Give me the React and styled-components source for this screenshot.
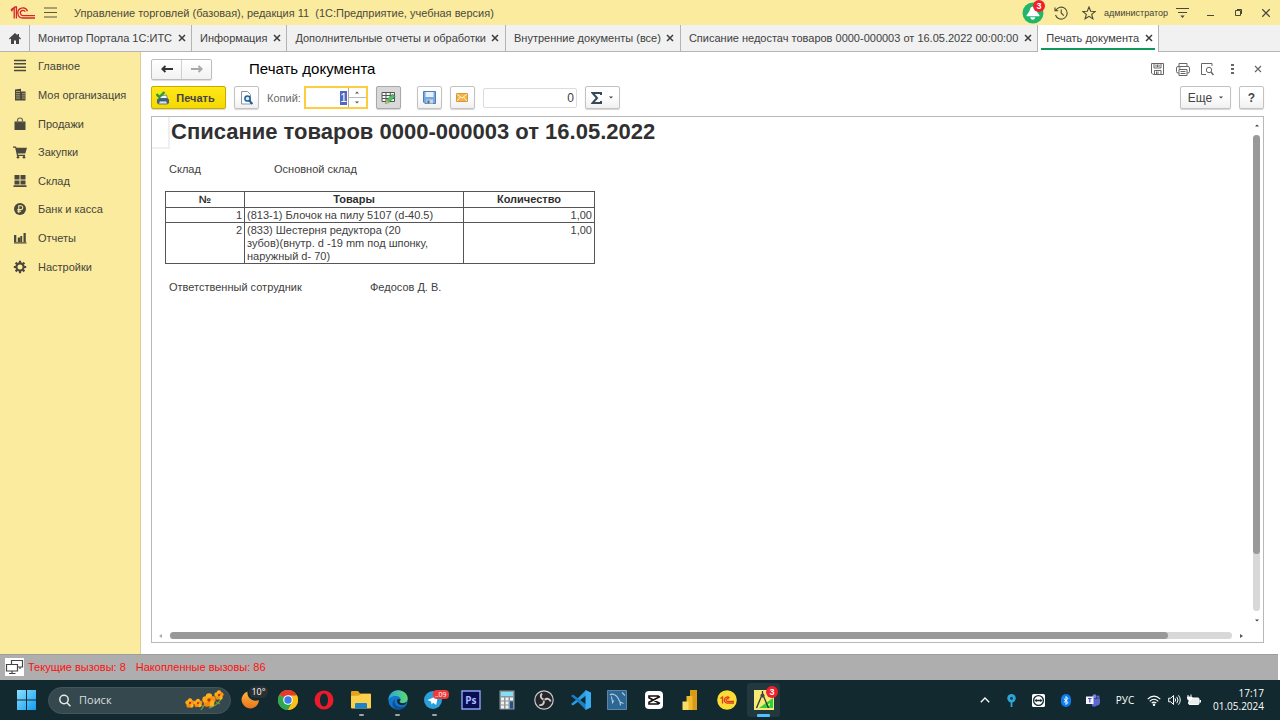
import React, { useEffect, useRef } from "react";
import styled, { createGlobalStyle, css } from "styled-components";

const GlobalStyle = createGlobalStyle`
  *, *::before, *::after { box-sizing: border-box; }
  body { margin: 0; background: #fff; color: #404040; font: 11px/14px "Liberation Sans", Arial, sans-serif; }
  button, input { font: inherit; color: inherit; margin: 0; }
  h1, h2, p, dl, dd, ul { margin: 0; padding: 0; }
  ul { list-style: none; }
  svg { display: block; flex: none; }
`;

const Page = styled.div`
  display: flex;
  flex-direction: column;
  min-height: 100vh;
`;

/* ---------- window title ---------- */
const TitleBar = styled.header`
  display: flex;
  align-items: center;
  height: 25px;
  padding: 0 0 0 10px;
  background: #fbeb9e;
`;
const PlainButton = styled.button`
  display: flex;
  align-items: center;
  justify-content: center;
  padding: 0;
  border: 0;
  background: none;
  color: inherit;
  cursor: pointer;
`;
const WindowTitle = styled.span`
  flex: 1;
  margin-left: 10px;
  font-size: 11px;
  color: #4c4a3c;
  white-space: pre;
`;
const TitleTools = styled.div`
  display: flex;
  align-items: center;
`;
const TitleTool = styled(PlainButton)`
  width: 28px;
  height: 25px;
`;
const UserName = styled.span`
  margin-left: 1px;
  font-size: 9px;
  color: #45443a;
`;
const BellButton = styled(TitleTool)`
  position: relative;
`;
const Badge = styled.span`
  position: absolute;
  top: ${(p) => p.$top}px;
  right: ${(p) => p.$right}px;
  width: 12px;
  height: 12px;
  border-radius: 6px;
  background: #f0202c;
  color: #fff;
  font: bold 9px/12px "Liberation Sans", Arial, sans-serif;
  text-align: center;
`;

/* ---------- open tabs ---------- */
const TabStrip = styled.nav`
  display: flex;
  height: 27px;
  border-bottom: 1px solid #b4b4b4;
  background: #f1f1f1;
`;
const HomeTab = styled(PlainButton)`
  width: 30px;
  border-right: 1px solid #b4b4b4;
  color: #444;
`;
const Tab = styled.div`
  display: flex;
  align-items: center;
  gap: 4px;
  padding: 0 4px 0 8px;
  border-right: 1px solid #b4b4b4;
  ${(p) =>
    p.$active &&
    css`
      margin-bottom: -1px;
      padding-bottom: 1px;
      background: linear-gradient(#109858, #109858) 50% 23px / calc(100% - 6px) 2px no-repeat #fff;
    `}
`;
const TabLabel = styled(PlainButton)`
  font-size: 11px;
  color: #404040;
  white-space: nowrap;
`;
const CloseButton = styled(PlainButton)`
  width: 11px;
  height: 12px;
  color: #3c3c3c;
`;

/* ---------- work area ---------- */
const Workspace = styled.div`
  display: flex;
  flex: 1;
`;
const Sidebar = styled.nav`
  width: 141px;
  border-right: 1px solid #d8cfa0;
  background: #fbeb9e;
`;
const Sections = styled.ul`
  display: grid;
  grid-template-rows: repeat(8, 1fr);
  height: 229px;
`;
const Section = styled.li`
  display: flex;
`;
const SectionLink = styled.a`
  display: flex;
  flex: 1;
  align-items: center;
  gap: 11px;
  padding-left: 13px;
  font-size: 11px;
  color: #45443a;
  text-decoration: none;
`;
const Main = styled.main`
  display: flex;
  flex: 1;
  flex-direction: column;
  min-width: 0;
  padding: 6px 16px 11px 10px;
`;
const FormHeader = styled.div`
  display: flex;
  align-items: center;
  height: 22px;
  margin-right: -6px;
`;
const NavButtons = styled.div`
  display: flex;
  width: 61px;
  height: 21px;
  border: 1px solid #bdbdbd;
  border-radius: 2px;
  background: linear-gradient(#fff, #f2f2f2);
  box-shadow: 0 1px 1px #ddd;
`;
const NavButton = styled(PlainButton)`
  flex: 1;
  color: ${(p) => (p.disabled ? "#a8a8a8" : "#333")};
  & + & { border-left: 1px solid #cfcfcf; }
`;
const FormTitle = styled.h1`
  flex: 1;
  margin-left: 37px;
  font-size: 15px;
  line-height: 20px;
  font-weight: normal;
  color: #000;
`;
const FormTool = styled(PlainButton)`
  width: 25px;
  height: 20px;
  color: #666;
`;

const Toolbar = styled.div`
  display: flex;
  align-items: center;
  gap: 8px;
  margin: 6px 0 7px;
  height: 23px;
`;
const ToolButton = styled.button`
  display: flex;
  align-items: center;
  justify-content: center;
  gap: 7px;
  width: ${(p) => p.$width || 25}px;
  height: 23px;
  padding: 0;
  border: 1px solid ${(p) => (p.$pressed ? "#a8a8a8" : "#c2c2c2")};
  border-radius: 2px;
  background: ${(p) => (p.$pressed ? "#d9d9d9" : "linear-gradient(#fff 40%, #f0f0f0)")};
  box-shadow: 0 1px 1px #d6d6d6;
  color: #444;
  font-size: 12px;
  cursor: pointer;
`;
const PrintButton = styled(ToolButton)`
  width: 75px;
  gap: 6px;
  padding-right: 6px;
  border-color: #c8ab00;
  background: linear-gradient(#ffe81a, #f5d800);
  font-size: 11px;
  font-weight: bold;
`;
const ButtonGap = styled.span`
  width: 0;
`;
const Spacer = styled.span`
  flex: 1;
`;
const Copies = styled.label`
  display: flex;
  align-items: center;
  gap: 3px;
  font-size: 11px;
  color: #6a6a6a;
`;
const CopiesBox = styled.span`
  display: flex;
  width: 64px;
  height: 23px;
  border: 2px solid #fccd3c;
  background: #fff;
`;
const CopiesInput = styled.input`
  width: 42px;
  padding: 0 1px 0 4px;
  border: 0;
  outline: 0;
  background: none;
  font-size: 12px;
  text-align: right;
  &::selection { background: #4d68c4; color: #fff; }
`;
const Stepper = styled.span`
  display: flex;
  flex: 1;
  flex-direction: column;
  border-left: 1px solid #aaa;
`;
const StepButton = styled(PlainButton)`
  flex: 1;
  color: #555;
  & + & { border-top: 1px solid #bbb; }
`;
const SumInput = styled.input`
  width: 94px;
  height: 20px;
  padding: 0 2px;
  border: 1px solid #dcdcdc;
  border-radius: 2px;
  outline: 0;
  font-size: 12px;
  text-align: right;
`;

/* ---------- printed form ---------- */
const Viewer = styled.section`
  display: grid;
  flex: 1;
  grid-template: 1fr 13px / 1fr 13px;
  border: 1px solid #b8b8b8;
`;
const Sheet = styled.article`
  color: #404040;
`;
const SheetHead = styled.div`
  display: flex;
  gap: 1px;
`;
const CurrentCell = styled.div`
  width: 18px;
  height: 32px;
  border: solid #efefef;
  border-width: 0 2px 2px 0;
`;
const DocTitle = styled.h2`
  font-size: 22px;
  line-height: 30px;
  color: #303030;
`;
const Fields = styled.dl`
  display: flex;
  margin: ${(p) => p.$top}px 0 15px 17px;
  line-height: 13px;
`;
const FieldName = styled.dt`
  width: ${(p) => p.$width}px;
`;
const Goods = styled.table`
  width: 430px;
  margin-left: 13px;
  border-collapse: collapse;
  table-layout: fixed;
  line-height: 13px;
`;
const Cell = styled.td`
  padding: 1px 2px 0;
  border: 1px solid #555;
  text-align: ${(p) => p.$align || "left"};
  vertical-align: top;
  white-space: pre-line;
`;
const HeadCell = styled.th`
  width: ${(p) => (p.$width ? `${p.$width}px` : "auto")};
  padding: 1px 2px;
  border: 1px solid #555;
  color: #303030;
`;
const ScrollBar = styled.div`
  display: flex;
  align-items: center;
  gap: 8px;
  flex-direction: ${(p) => (p.$vertical ? "column" : "row")};
  padding: ${(p) => (p.$vertical ? "7px 0" : "0 7px")};
`;
const Track = styled.div`
  display: flex;
  flex: 1;
  flex-direction: inherit;
  align-items: stretch;
  border-radius: 4px;
  background: #d8d8d8;
  ${(p) => (p.$vertical ? "width: 7px;" : "height: 7px;")}
`;
const Thumb = styled.div`
  flex: 0 0 ${(p) => p.$share}%;
  border-radius: 4px;
  background: #999;
`;

/* ---------- status line ---------- */
const StatusBar = styled.footer`
  display: flex;
  align-items: center;
  gap: 10px;
  height: 26px;
  margin-right: 2px;
  padding: 0 0 2px 5px;
  border-top: 1px solid #9e9e9e;
  background: #aeaeae;
  color: #ff1010;
  font-size: 11px;
`;
const StatusLead = styled.span`
  display: flex;
  align-items: center;
  gap: 4px;
`;

/* ---------- desktop taskbar ---------- */
const Taskbar = styled.div`
  display: flex;
  align-items: center;
  height: 40px;
  padding: 0 16px 0 16px;
  background: #12292f;
  color: #fff;
  font-family: "Open Sans", "Noto Sans", sans-serif;
`;
const SearchBox = styled.label`
  display: flex;
  align-items: center;
  gap: 8px;
  width: 183px;
  height: 27px;
  margin: 0 2px 0 11px;
  padding: 0 6px 0 10px;
  border: 1px solid #43565b;
  border-radius: 14px;
  background: #35484d;
`;
const SearchInput = styled.input`
  flex: 1;
  min-width: 0;
  padding: 0;
  border: 0;
  outline: 0;
  background: none;
  font-size: 11px;
  &::placeholder { color: #d9dfe0; opacity: 1; }
`;
const Apps = styled.div`
  display: grid;
  grid-template-columns: repeat(15, 1fr);
  width: 549px;
`;
const AppButton = styled(PlainButton)`
  position: relative;
  height: 34px;
  margin: 0 2px;
  border-radius: 3px;
  background: ${(p) => (p.$active ? "#22383e" : "none")};
  ${(p) =>
    (p.$running || p.$active) &&
    css`
      &::after {
        content: "";
        position: absolute;
        bottom: ${p.$active ? 0 : 1}px;
        width: ${p.$active ? 13 : 5}px;
        height: ${p.$active ? 3 : 2}px;
        border-radius: 1px;
        background: ${p.$active ? "#4cc2ff" : "#9aa5a8"};
      }
    `}
`;
const Pill = styled.span`
  position: absolute;
  top: ${(p) => (p.$red ? 7 : 3)}px;
  right: ${(p) => (p.$red ? 2 : 0)}px;
  padding: 0 2px;
  border-radius: ${(p) => (p.$red ? 4 : 6)}px;
  background: ${(p) => (p.$red ? "#ee3a3a" : "#2b3033")};
  font-size: ${(p) => (p.$red ? 7 : 9)}px;
  line-height: ${(p) => (p.$red ? 9 : 12)}px;
`;
const Tray = styled.div`
  display: flex;
  align-items: center;
  margin-left: auto;
`;
const TrayButton = styled(PlainButton)`
  width: ${(p) => p.$width || 27}px;
  height: 34px;
  font-size: 10px;
`;
const Clock = styled.time`
  margin-left: 9px;
  font-size: 10px;
  line-height: 13px;
  text-align: right;
`;

/* ---------- drawings ---------- */
const Logo = () => (
  <svg width="26" height="14" viewBox="0 0 26 14" fill="none" stroke="#d8232a" strokeWidth="1.3">
    <path d="M1 4.5 4.2 2v10.5M2 5.5V3.6M6.4 12.5V1H5L1 3.8" />
    <path d="M17.5 5.2A5 5 0 1 0 13 12h12" />
    <path d="M15.2 5.7A2.6 2.6 0 1 0 13 9.6h12" />
  </svg>
);
const MenuIcon = () => (
  <svg width="13" height="11" viewBox="0 0 13 11" stroke="#5a573f" strokeWidth="1.2">
    <path d="M0 1h13M0 5.5h13M0 10h13" />
  </svg>
);
const BellIcon = () => (
  <svg width="22" height="22" viewBox="0 0 22 22">
    <circle cx="11" cy="11" r="10.5" fill="#21b66b" />
    <path d="M11 4.500c-2.500.3-3 2.500-3.500 4.500L4.500 13.500q-.4.800.5.800h12q.9 0 .5-.8L14.500 9C14 7 13.500 4.800 11 4.500z" fill="#fff" />
    <path d="M8.300 15.200h4.900c0 3.300-4.900 3.300-4.900 0z" fill="#fff" />
  </svg>
);
const HistoryIcon = () => (
  <svg width="14" height="14" viewBox="0 0 14 14" fill="none" stroke="#4a4838" strokeWidth="1.1">
    <path d="M1.8 4.5A6 6 0 1 1 1.5 9M1 1.5v3.3h3.3M7.2 3.5V7l2.6 2.7" />
  </svg>
);
const StarIcon = () => (
  <svg width="14" height="14" viewBox="0 0 14 14" fill="none" stroke="#4a4838" strokeWidth="1.1">
    <path d="M7 1l1.700 4.200 4.500.3-3.500 2.900 1.200 4.400L7 10.400l-3.900 2.400 1.200-4.400L.8 5.500l4.500-.3z" />
  </svg>
);
const SettingsMenuIcon = () => (
  <svg width="13" height="12" viewBox="0 0 13 12">
    <path d="M0 1.500h13M2 5.500h9" stroke="#4a4838" strokeWidth="1.2" />
    <path d="M4.300 8.500h4.400L6.500 11z" fill="#4a4838" />
  </svg>
);
const MinimizeIcon = () => (
  <svg width="9" height="10" viewBox="0 0 9 10" stroke="#4a4838"><path d="M1 7.500h7" /></svg>
);
const RestoreIcon = () => (
  <svg width="9" height="9" viewBox="0 0 9 9" fill="none" stroke="#4a4838">
    <path d="M1.500 2.500h5v5h-5zM3 1.500h4.500V6" />
  </svg>
);
const Cross = ({ size = 8, width = 1.5 }) => (
  <svg width={size} height={size} viewBox="0 0 8 8" stroke="currentColor" strokeWidth={width}>
    <path d="M1 1l6 6M7 1L1 7" />
  </svg>
);
const HomeIcon = () => (
  <svg width="12" height="11" viewBox="0 0 12 11" fill="currentColor">
    <path d="M6 0L0 5.600l.8.8L2 5.500V11h3V7.500h2V11h3V5.500l1.200.9.800-.8-2-1.900V1H8.500v1.300z" />
  </svg>
);
const Arrow = ({ flip }) => (
  <svg width="12" height="8" viewBox="0 0 12 8" fill="none" stroke="currentColor" strokeWidth="1.9">
    {flip ? <path d="M0 4h11M7.500 1l3.200 3-3.200 3" /> : <path d="M12 4H1M4.500 1L1.300 4l3.200 3" />}
  </svg>
);

const sectionIcons = {
  list: <path d="M1 1.500h12M1 4.800h12M1 8.200h12M1 11.500h12" stroke="#4b493d" strokeWidth="1.6" />,
  building: (
    <>
      <path d="M2 1.500l6-.8V12.500H2zM8 3.500h4.500v9H8z" fill="#4b493d" />
      <path d="M3 3.500h4M3 5.700h4M3 7.900h4M3 10.100h4M9 5.700h3M9 7.900h3M9 10.100h3" stroke="#c6ba7e" strokeWidth=".8" />
    </>
  ),
  bag: (
    <>
      <path d="M1.500 4.500h11v8.500h-11z" fill="#4b493d" />
      <path d="M4.500 6V3.500a2.500 2.500 0 0 1 5 0V6" fill="none" stroke="#6d6a54" strokeWidth="1.2" />
    </>
  ),
  cart: (
    <>
      <path d="M0 1.500h2.800l.8 1.300H14L12.300 8.500H4.800l.2 1.200h7v1.200H4L2.200 2.700H0z" fill="#4b493d" />
      <circle cx="5" cy="12.200" r="1.3" fill="#4b493d" />
      <circle cx="11" cy="12.200" r="1.3" fill="#4b493d" />
    </>
  ),
  stock: <path d="M1.500 1h5v4.600h-5zM7.500 1h5v4.600h-5zM1.500 6.500h5v4h-5zM7.500 6.500h5v4h-5zM.5 11.300h13V13H.5z" fill="#4b493d" />,
  ruble: (
    <>
      <circle cx="7" cy="7" r="6" fill="#4b493d" />
      <path d="M5.800 11V3.800h2.100a1.900 1.900 0 0 1 0 3.800H4.300M4.300 9.200h3.800" fill="none" stroke="#fbeb9e" strokeWidth="1.1" />
    </>
  ),
  chart: <path d="M1 4h2.300v7H1zM4.800 6.500h2.300V11H4.800zM7.300 5h1.900v6H7.300zM10.500 2h2.300v9h-2.300zM1 11.200h12.500v1.200H1z" fill="#4b493d" />,
  gear: (
    <>
      <circle cx="7" cy="7" r="3.6" fill="none" stroke="#4b493d" strokeWidth="2.2" />
      <path d="M7 .8v2.400M7 10.800v2.400M.8 7h2.400M10.800 7h2.400M2.600 2.600l1.700 1.700M9.700 9.700l1.700 1.700M2.600 11.400l1.700-1.700M9.700 4.300l1.700-1.700" stroke="#4b493d" strokeWidth="2.2" />
    </>
  ),
};

const PrinterColorIcon = () => (
  <svg width="14" height="14" viewBox="0 0 14 14">
    <path d="M3.500 5l7-1 1 4h-8z" fill="#f4f8fb" stroke="#5a7285" strokeWidth=".8" />
    <path d="M1 8.500l2-1.500h8l2 1.500v4H1z" fill="#48637a" />
    <path d="M3.500 10h7l1 3h-9z" fill="#cfe3f0" stroke="#35516a" strokeWidth=".7" />
    <path d="M.5 3l2.800 3L8.500 1" fill="none" stroke="#23a03c" strokeWidth="2.4" />
  </svg>
);
const PreviewIcon = () => (
  <svg width="13" height="14" viewBox="0 0 13 14" fill="none">
    <path d="M1.500.5h6l3 3v9.500h-9z" fill="#fff" stroke="#8a97a3" />
    <circle cx="7.500" cy="7.500" r="2.600" fill="#d5e9f8" stroke="#1f5f94" strokeWidth="1.5" />
    <path d="M9.300 9.500l3 3.500" stroke="#1f5f94" strokeWidth="2" />
  </svg>
);
const GridPencilIcon = () => (
  <svg width="15" height="13" viewBox="0 0 15 13">
    <path d="M1 1.500h12.500v9H1zM1 4.500h12.500M1 7.500h12.500M5 1.500v9M9.300 1.500v9" fill="#f7f7f7" stroke="#555" />
    <path d="M4.500 12.500l1-3.500 6-6 2.500 2.500-6 6z" fill="#4fc06a" stroke="#217a3a" strokeWidth=".5" />
    <path d="M4.500 12.500l1-3.500 2.500 2.500z" fill="#e8b070" />
  </svg>
);
const DiskColorIcon = () => (
  <svg width="13" height="13" viewBox="0 0 13 13">
    <path d="M.5.5h12v12H2L.5 11z" fill="#76a9df" stroke="#4f7fb8" />
    <path d="M2.500 1h8v5h-8z" fill="#e6f1fb" />
    <path d="M3.500 8.500h6.500v4H3.500z" fill="#c9d6e2" />
    <path d="M4.500 9.500h2v3h-2z" fill="#49698a" />
  </svg>
);
const MailIcon = () => (
  <svg width="12" height="9" viewBox="0 0 12 9">
    <path d="M.5.5h11v8H.5z" fill="#f3b34c" stroke="#d99732" />
    <path d="M.8 1L6 5l5.200-4M1 8l3.500-4M11 8L7.500 4" fill="none" stroke="#fff1d0" />
  </svg>
);
const SigmaIcon = () => (
  <svg width="11" height="12" viewBox="0 0 11 12" fill="none" stroke="#34495a" strokeWidth="2">
    <path d="M10 3V1H1.500L6 6l-4.500 5H10V9" />
  </svg>
);
const Caret = ({ up }) => (
  <svg width="4" height="3" viewBox="0 0 4 3" fill="currentColor">
    <path d={up ? "M0 2.500h4L2 .5z" : "M0 .5h4L2 2.500z"} />
  </svg>
);
const SideCaret = ({ left }) => (
  <svg width="3" height="4" viewBox="0 0 3 4" fill={left ? "#aaa" : "#555"}>
    <path d={left ? "M3 0v4L0 2z" : "M0 0v4l3-2z"} />
  </svg>
);
const SaveIcon = () => (
  <svg width="13" height="12" viewBox="0 0 13 12" fill="none" stroke="currentColor">
    <path d="M.5.5h12v11H2L.5 10zM3 .5V5h7V.5M3.500 11.500v-4h6.500v4M5 1.500V4M6.500 1.500V4M8 1.500V4M5.500 8.500v3h1.500v-3" />
  </svg>
);
const PrinterIcon = () => (
  <svg width="14" height="13" viewBox="0 0 14 13" fill="none" stroke="currentColor">
    <path d="M3 3.500v-3h8v3M3 10H2Q.5 10 .5 8.500V5Q.5 3.500 2 3.500h10q1.500 0 1.500 1.500v3.500Q13.500 10 12 10h-1M3 6.500h8v6H3zM4.500 8.500h5M4.500 10.500h5M2.500 5h2" />
  </svg>
);
const PageSearchIcon = () => (
  <svg width="13" height="13" viewBox="0 0 13 13" fill="none" stroke="currentColor">
    <path d="M5 11.500H.5V.5h10.500V3" />
    <circle cx="8" cy="7" r="2.7" />
    <path d="M10 9l2.500 3" strokeWidth="1.5" />
  </svg>
);
const DotsIcon = () => (
  <svg width="3" height="10" viewBox="0 0 3 10" fill="currentColor">
    <path d="M0 0h3v2H0zM0 4h3v2H0zM0 8h3v2H0z" />
  </svg>
);
const CallsIcon = () => (
  <svg width="19" height="18" viewBox="0 0 19 18">
    <path d="M0 0h19v18H0z" fill="#fff" />
    <path d="M6.500 6V2.500h11V9H13M1.500 6.500h11v6.500h-11zM7 13v2.500M4 15.500h6.500M15 9v2" fill="none" stroke="#444" strokeWidth="1.2" />
  </svg>
);

const WindowsIcon = () => (
  <svg width="21" height="20" viewBox="0 0 21 20">
    <defs>
      <linearGradient id="win" x1="0" y1="0" x2="1" y2="1">
        <stop offset="0" stopColor="#8be0ff" />
        <stop offset="1" stopColor="#109cf0" />
      </linearGradient>
    </defs>
    <path d="M1 0h9v9.500H1zM11 0h9v9.500h-9zM1 10.500h9V20H1zM11 10.500h9V20h-9z" fill="url(#win)" />
  </svg>
);
const SearchIcon = () => (
  <svg width="12" height="13" viewBox="0 0 12 13" fill="none" stroke="#e4e9ea" strokeWidth="1.5">
    <circle cx="5" cy="5.500" r="4.2" />
    <path d="M8 8.700l3.500 3.600" />
  </svg>
);
const Flower = ({ x, y, s = 1 }) => (
  <g transform={`translate(${x} ${y}) scale(${s})`}>
    <circle cx="0" cy="-3" r="2.8" fill="#ffb11f" />
    <circle cx="3" cy="-.5" r="2.8" fill="#f79212" />
    <circle cx="1.800" cy="3" r="2.8" fill="#ffb11f" />
    <circle cx="-1.800" cy="3" r="2.8" fill="#f58a0c" />
    <circle cx="-3" cy="-.5" r="2.8" fill="#ffa81a" />
    <circle r="1.5" fill="#b23a08" />
  </g>
);
const FlowersIcon = () => (
  <svg width="39" height="21" viewBox="0 0 39 21">
    <path d="M4 15q10-5 14 2M16 20q6-10 14-14M24 18q8-2 12-9M31 12l4 2" fill="none" stroke="#6e9a4a" strokeWidth="1.3" />
    <Flower x={5} y={13} s={0.8} />
    <Flower x={13} y={13} s={0.75} />
    <Flower x={24} y={10} s={1.15} />
    <Flower x={34} y={5} s={0.8} />
  </svg>
);

const appDrawings = {
  weather: (
    <>
      <defs>
        <linearGradient id="moon" x1="0" y1="0" x2="0" y2="1">
          <stop offset="0" stopColor="#ffb43c" />
          <stop offset="1" stopColor="#e8741c" />
        </linearGradient>
      </defs>
      <path d="M6.500 1.500c-1 6 5 11 11.500 8.500A8.700 8.700 0 1 1 6.500 1.500z" fill="url(#moon)" />
    </>
  ),
  chrome: (
    <>
      <circle cx="10" cy="10" r="10" fill="#fbc116" />
      <path d="M10 10L1.300 5A10 10 0 0 1 18.700 5z" fill="#e33b2e" />
      <path d="M10 10L1.300 5a10 10 0 0 0 8.700 15l4.300-7.500z" fill="#2da94f" />
      <path d="M10 5.500h9A10 10 0 0 1 10 20l4-7.500z" fill="#fbc116" />
      <circle cx="10" cy="10" r="4.8" fill="#fff" />
      <circle cx="10" cy="10" r="3.7" fill="#3c7bea" />
    </>
  ),
  opera: <path fillRule="evenodd" d="M10 .5a9.500 9.500 0 1 0 0 19 9.500 9.500 0 0 0 0-19zm0 3c2.600 0 4 3 4 6.500s-1.400 6.500-4 6.500S6 13.500 6 10s1.400-6.500 4-6.500z" fill="#ea1b2d" />,
  explorer: (
    <>
      <path d="M0 2q0-1 1-1h6l2 2.500h10q1 0 1 1V17H0z" fill="#e4a11c" />
      <path d="M0 6l8-.5 2-1.500h10v13.500q0 1-1 1H1q-1 0-1-1z" fill="#fdd04b" />
      <path d="M4 18.500V14q0-1 1-1h10q1 0 1 1v4.500z" fill="#1f83c8" />
    </>
  ),
  edge: (
    <>
      <defs>
        <linearGradient id="edgeTop" x1="0" y1="0" x2="1" y2="0">
          <stop offset="0" stopColor="#2aa5e0" />
          <stop offset="1" stopColor="#5bdc6c" />
        </linearGradient>
      </defs>
      <circle cx="10" cy="10" r="9.7" fill="#1577c8" />
      <path d="M.3 10C.8 4.300 5 .3 10.200.3c5.500 0 9.500 4 9.500 8 0 3-2.200 5-5 5-2 0-3.200-.8-3.200-1.500s1-1 1-2.500C12.500 7.500 10.800 6 8 6 4 6 1 8 .3 10z" fill="url(#edgeTop)" />
      <path d="M7.500 9c-3 5 2 9.500 9 7.500 1-.3 1.600-1 1.600-1-1 2-4 4.200-7.600 4.200C4 19 2.500 12 7.500 9z" fill="#0c4f9b" />
      <path d="M12.500 9.300c0 1.500-1 1.800-1 2.500s1.200 1.500 3.200 1.500c1.500 0 3-.5 4-1.700-.3 2.500-2.500 4-5 3.700-4-.4-5.700-3.500-4-6.300z" fill="#12292f" />
    </>
  ),
  telegram: (
    <>
      <circle cx="9" cy="10" r="9" fill="#2a9fdb" />
      <path d="M3.500 10L14 5.500 12.200 15l-3-2.200-1.600 1.800-.6-3z" fill="#fff" />
    </>
  ),
  photoshop: <path d="M1 1h18v18H1z" fill="#0b0d52" stroke="#8aa4f4" strokeWidth="1.4" />,
  calculator: (
    <>
      <path d="M2.500.5h15v19h-15z" fill="#8d979c" />
      <path d="M4 2h12v4H4z" fill="#7fe0f6" />
      <path d="M4 7.500h3v3H4zM8.500 7.500h3v3h-3zM13 7.500h3v3h-3zM4 11.500h3v3H4zM8.500 11.500h3v3h-3zM4 15.500h3v3H4zM8.500 15.500h3v3h-3z" fill="#eef2f3" />
      <path d="M13 11.500h3v7h-3z" fill="#20518d" />
    </>
  ),
  obs: (
    <>
      <circle cx="10" cy="10" r="9.200" fill="#26262a" stroke="#c9c9c9" strokeWidth="1.2" />
      <g fill="none" stroke="#cfcfcf" strokeWidth="1.9">
        <path d="M8 3.500c-2 2-1.500 5 1.500 6" />
        <path d="M8 3.500c-2 2-1.500 5 1.500 6" transform="rotate(120 10 10)" />
        <path d="M8 3.500c-2 2-1.500 5 1.500 6" transform="rotate(240 10 10)" />
      </g>
    </>
  ),
  vscode: (
    <>
      <path d="M15 0v5.500L2 15.500 0 14l5-4z" fill="#2b9fea" />
      <path d="M15 20v-5.500L2 4.500 0 6l5 4z" fill="#1b80c8" />
      <path d="M14.500 0L20 2.500v15L14.500 20z" fill="#38adf2" />
    </>
  ),
  workbench: (
    <>
      <path d="M.5.5h19v19H.5z" fill="#2c6796" stroke="#5c86a8" />
      <path d="M3 5c1.500-1.500 3-1 4.500-.2C10.500 6 11.500 9 13 12l3.500 1.500M4.500 6.500c0 2.500 1 3 1 6l1.500-2M13 12l.5 3.500M15 2.500l3 3" fill="none" stroke="#b4cbdc" strokeWidth="1.1" />
    </>
  ),
  capcut: (
    <>
      <rect x="1" y="1" width="18" height="18" rx="4" fill="#fff" />
      <path d="M16 6.500L5 12.300V14h9v-1.500M16 13.500L5 7.700V6h9v1.500" fill="none" stroke="#111" strokeWidth="1.6" />
    </>
  ),
  powerbi: (
    <>
      <path d="M10 0h7v20h-7z" fill="#d99a18" />
      <path d="M6.500 6h6v14h-6z" fill="#efba2c" />
      <path d="M2.500 11.500h6V20h-6z" fill="#fbdc66" />
    </>
  ),
  onec: (
    <>
      <circle cx="10" cy="10" r="9.8" fill="#fbdc35" />
      <path d="M3.500 8.500L5.500 7v6.500M12.500 8A3 3 0 1 0 10.500 13h6.500M11.500 9.300a1.300 1.300 0 1 0-1 2h6.500" fill="none" stroke="#dc3b20" strokeWidth="1.3" />
    </>
  ),
  designer: (
    <>
      <path d="M0 0h20v20H0z" fill="#f6ea76" />
      <path d="M19 8v10H5z" fill="#2fd03a" />
      <path d="M16 13v2.500h-3.500z" fill="#f6ea76" />
      <path d="M8.500 1v3M8 5L2.500 18M9 5l5.500 13" fill="none" stroke="#333" strokeWidth="1.3" />
      <circle cx="8.500" cy="5.500" r="2" fill="#444" />
    </>
  ),
};
const PsText = styled.span`
  position: absolute;
  color: #a9bcff;
  font: bold 10px/20px "Open Sans", sans-serif;
`;

const ChevronUp = () => (
  <svg width="10" height="6" viewBox="0 0 10 6" fill="none" stroke="#fff" strokeWidth="1.3"><path d="M.8 5.200L5 1l4.200 4.200" /></svg>
);
const PinIcon = () => (
  <svg width="9" height="13" viewBox="0 0 9 13">
    <circle cx="4.500" cy="4.300" r="4.2" fill="#2fa6d8" />
    <circle cx="4.500" cy="4.300" r="1.5" fill="#12425c" />
    <path d="M4.500 7v6" stroke="#2fa6d8" strokeWidth="1.8" />
  </svg>
);
const RemoteIcon = () => (
  <svg width="13" height="13" viewBox="0 0 13 13">
    <rect width="13" height="13" rx="1.5" fill="#fff" />
    <circle cx="6.500" cy="6.500" r="4.9" fill="none" stroke="#12292f" strokeWidth="1.3" />
    <path d="M2.500 6.500l2.200-1.800v1.100h3.600V4.700l2.200 1.800-2.200 1.800V7.200H4.700v1.100z" fill="#12292f" />
  </svg>
);
const BluetoothIcon = () => (
  <svg width="10" height="13" viewBox="0 0 10 13" fill="none">
    <rect width="10" height="13" rx="5" fill="#0a7cf0" />
    <path d="M2.800 4.500l4.200 4-2 2v-8l2 2-4.200 4" stroke="#fff" />
  </svg>
);
const TeamsIcon = () => (
  <svg width="14" height="13" viewBox="0 0 14 13">
    <circle cx="8.500" cy="2.200" r="2" fill="#7a80eb" />
    <circle cx="12.200" cy="3" r="1.4" fill="#5a62c8" />
    <path d="M5 4.500h9v4.500q-1 3-3 2.500Q9 13.500 6 12z" fill="#5f66d0" />
    <path d="M0 2.500h7.500V10H0z" fill="#f4f4ff" />
    <path d="M2 4.500h3.600M3.800 4.500v4" stroke="#4b53bc" strokeWidth="1.2" />
  </svg>
);
const WifiIcon = () => (
  <svg width="14" height="11" viewBox="0 0 14 11" fill="none" stroke="#fff" strokeWidth="1.1">
    <path d="M.7 4.200Q7-2 13.300 4.200M2.700 6.300Q7 2.200 11.300 6.300M4.700 8.200Q7 6 9.300 8.200" />
    <circle cx="7" cy="9.700" r=".7" fill="#fff" />
  </svg>
);
const VolumeIcon = () => (
  <svg width="13" height="12" viewBox="0 0 13 12" fill="none" stroke="#fff">
    <path d="M.7 4.200h2L5.500 1.500v9L2.700 7.800h-2zM7 4.300q1.300 1.700 0 3.400M8.800 2.800q2.400 3.200 0 6.400M10.500 1.300q3.500 4.700 0 9.400" />
  </svg>
);
const BatteryIcon = () => (
  <svg width="14" height="12" viewBox="0 0 14 12">
    <path d="M3 4h8q1 0 1 1v4.500q0 1-1 1H3q-1.500 0-1.500-1.500z" fill="#e8eeee" stroke="#fff" />
    <path d="M12.500 6H14v2.500h-1.500z" fill="#fff" />
    <path d="M1 1v2M4 .5v2M.5 3h4.500v1.500Q4.500 6.500 2.800 6.500T.5 4.500z" fill="#fff" stroke="#fff" />
  </svg>
);

/* ---------- data ---------- */
const tabs = [
  "Монитор Портала 1С:ИТС",
  "Информация",
  "Дополнительные отчеты и обработки",
  "Внутренние документы (все)",
  "Списание недостач товаров 0000-000003 от 16.05.2022 00:00:00",
  "Печать документа",
];
const sections = [
  ["list", "Главное"],
  ["building", "Моя организация"],
  ["bag", "Продажи"],
  ["cart", "Закупки"],
  ["stock", "Склад"],
  ["ruble", "Банк и касса"],
  ["chart", "Отчеты"],
  ["gear", "Настройки"],
];
const goods = [
  ["(813-1) Блочок на пилу 5107 (d-40.5)", "1,00"],
  ["(833) Шестерня редуктора (20\nзубов)(внутр. d -19 mm под шпонку,\nнаружный d- 70)", "1,00"],
];
const apps = [
  { id: "weather", name: "Погода", pill: "10°" },
  { id: "chrome", name: "Chrome" },
  { id: "opera", name: "Opera" },
  { id: "explorer", name: "Проводник", running: true },
  { id: "edge", name: "Edge", running: true },
  { id: "telegram", name: "Telegram", running: true, red: "..09" },
  { id: "photoshop", name: "Photoshop" },
  { id: "calculator", name: "Калькулятор" },
  { id: "obs", name: "OBS" },
  { id: "vscode", name: "VS Code" },
  { id: "workbench", name: "Workbench" },
  { id: "capcut", name: "CapCut" },
  { id: "powerbi", name: "Power BI" },
  { id: "onec", name: "1С" },
  { id: "designer", name: "1С:Предприятие", active: true },
];

function CopiesField() {
  const ref = useRef(null);
  useEffect(() => {
    ref.current.focus();
    ref.current.select();
  }, []);
  return (
    <Copies>
      Копий:
      <CopiesBox>
        <CopiesInput ref={ref} defaultValue="1" />
        <Stepper>
          <StepButton aria-label="Больше"><Caret up /></StepButton>
          <StepButton aria-label="Меньше"><Caret /></StepButton>
        </Stepper>
      </CopiesBox>
    </Copies>
  );
}

function PrintedForm() {
  return (
    <Sheet>
      <SheetHead>
        <CurrentCell />
        <DocTitle>Списание товаров 0000-000003 от 16.05.2022</DocTitle>
      </SheetHead>
      <Fields $top={14}>
        <FieldName $width={105}>Склад</FieldName>
        <dd>Основной склад</dd>
      </Fields>
      <Goods>
        <thead>
          <tr>
            <HeadCell $width={79}>№</HeadCell>
            <HeadCell $width={219}>Товары</HeadCell>
            <HeadCell>Количество</HeadCell>
          </tr>
        </thead>
        <tbody>
          {goods.map(([name, count], i) => (
            <tr key={name}>
              <Cell $align="right">{i + 1}</Cell>
              <Cell>{name}</Cell>
              <Cell $align="right">{count}</Cell>
            </tr>
          ))}
        </tbody>
      </Goods>
      <Fields $top={17}>
        <FieldName $width={201}>Ответственный сотрудник</FieldName>
        <dd>Федосов Д. В.</dd>
      </Fields>
    </Sheet>
  );
}

export default function App() {
  return (
    <Page>
      <GlobalStyle />
      <TitleBar>
        <Logo />
        <TitleTool aria-label="Главное меню"><MenuIcon /></TitleTool>
        <WindowTitle>{"Управление торговлей (базовая), редакция 11  (1С:Предприятие, учебная версия)"}</WindowTitle>
        <TitleTools>
          <BellButton aria-label="Оповещения"><BellIcon /><Badge $top={0} $right={2}>3</Badge></BellButton>
          <TitleTool aria-label="История"><HistoryIcon /></TitleTool>
          <TitleTool aria-label="Избранное"><StarIcon /></TitleTool>
          <UserName>администратор</UserName>
          <TitleTool aria-label="Настройки"><SettingsMenuIcon /></TitleTool>
          <TitleTool aria-label="Свернуть"><MinimizeIcon /></TitleTool>
          <TitleTool aria-label="Развернуть"><RestoreIcon /></TitleTool>
          <TitleTool aria-label="Закрыть"><Cross size={10} width={0.9} /></TitleTool>
        </TitleTools>
      </TitleBar>

      <TabStrip>
        <HomeTab aria-label="Начальная страница"><HomeIcon /></HomeTab>
        {tabs.map((name, i) => (
          <Tab key={name} $active={i === tabs.length - 1}>
            <TabLabel>{name}</TabLabel>
            <CloseButton aria-label="Закрыть вкладку"><Cross /></CloseButton>
          </Tab>
        ))}
      </TabStrip>

      <Workspace>
        <Sidebar>
          <Sections>
            {sections.map(([icon, name]) => (
              <Section key={name}>
                <SectionLink href="#">
                  <svg width="14" height="14" viewBox="0 0 14 14">{sectionIcons[icon]}</svg>
                  {name}
                </SectionLink>
              </Section>
            ))}
          </Sections>
        </Sidebar>

        <Main>
          <FormHeader>
            <NavButtons>
              <NavButton aria-label="Назад"><Arrow /></NavButton>
              <NavButton aria-label="Вперед" disabled><Arrow flip /></NavButton>
            </NavButtons>
            <FormTitle>Печать документа</FormTitle>
            <FormTool aria-label="Сохранить"><SaveIcon /></FormTool>
            <FormTool aria-label="Печать"><PrinterIcon /></FormTool>
            <FormTool aria-label="Просмотр"><PageSearchIcon /></FormTool>
            <FormTool aria-label="Меню"><DotsIcon /></FormTool>
            <FormTool aria-label="Закрыть"><Cross width={1.2} /></FormTool>
          </FormHeader>

          <Toolbar>
            <PrintButton><PrinterColorIcon />Печать</PrintButton>
            <ToolButton aria-label="Предварительный просмотр"><PreviewIcon /></ToolButton>
            <CopiesField />
            <ToolButton $pressed aria-label="Редактирование"><GridPencilIcon /></ToolButton>
            <ButtonGap />
            <ToolButton aria-label="Сохранить на диск"><DiskColorIcon /></ToolButton>
            <ToolButton aria-label="Отправить по почте"><MailIcon /></ToolButton>
            <SumInput aria-label="Сумма" defaultValue="0" />
            <ToolButton $width={35} aria-label="Итог"><SigmaIcon /><Caret /></ToolButton>
            <Spacer />
            <ToolButton $width={51}>Еще<Caret /></ToolButton>
            <ToolButton><b>?</b></ToolButton>
          </Toolbar>

          <Viewer>
            <PrintedForm />
            <ScrollBar $vertical>
              <Caret up />
              <Track $vertical><Thumb $share={88} /></Track>
              <Caret />
            </ScrollBar>
            <ScrollBar>
              <SideCaret left />
              <Track><Thumb $share={94} /></Track>
              <SideCaret />
            </ScrollBar>
          </Viewer>
        </Main>
      </Workspace>

      <StatusBar>
        <StatusLead><CallsIcon />Текущие вызовы: 8</StatusLead>
        <span>Накопленные вызовы: 86</span>
      </StatusBar>

      <Taskbar>
        <PlainButton aria-label="Пуск"><WindowsIcon /></PlainButton>
        <SearchBox>
          <SearchIcon />
          <SearchInput placeholder="Поиск" />
          <FlowersIcon />
        </SearchBox>
        <Apps>
          {apps.map((app) => (
            <AppButton key={app.id} aria-label={app.name} $running={app.running} $active={app.active}>
              <svg width="20" height="20" viewBox="0 0 20 20">{appDrawings[app.id]}</svg>
              {app.id === "photoshop" && <PsText>Ps</PsText>}
              {app.pill && <Pill>{app.pill}</Pill>}
              {app.red && <Pill $red>{app.red}</Pill>}
              {app.active && <Badge $top={3} $right={2}>3</Badge>}
            </AppButton>
          ))}
        </Apps>
        <Tray>
          <TrayButton aria-label="Скрытые значки"><ChevronUp /></TrayButton>
          <TrayButton aria-label="Метка"><PinIcon /></TrayButton>
          <TrayButton aria-label="Удаленный доступ"><RemoteIcon /></TrayButton>
          <TrayButton aria-label="Bluetooth"><BluetoothIcon /></TrayButton>
          <TrayButton aria-label="Teams"><TeamsIcon /></TrayButton>
          <TrayButton $width={38}>РУС</TrayButton>
          <TrayButton $width={20} aria-label="Сеть"><WifiIcon /></TrayButton>
          <TrayButton $width={20} aria-label="Звук"><VolumeIcon /></TrayButton>
          <TrayButton $width={20} aria-label="Батарея"><BatteryIcon /></TrayButton>
          <Clock>17:17<br />01.05.2024</Clock>
        </Tray>
      </Taskbar>
    </Page>
  );
}
